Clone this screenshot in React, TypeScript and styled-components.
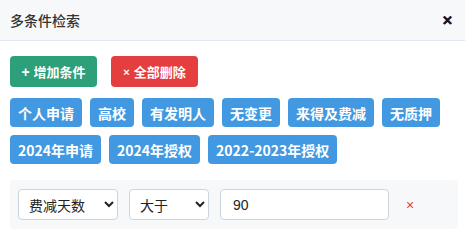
import styled, { createGlobalStyle } from 'styled-components';

const GlobalStyle = createGlobalStyle`
	body {
		margin: 0;
		background: #fff;
		font-family: 'Noto Sans CJK SC', 'Noto Sans', sans-serif;
	}
`;

interface ITag {
	label: string;
}

const row1: ITag[] = [
	{ label: '个人申请' },
	{ label: '高校' },
	{ label: '有发明人' },
	{ label: '无变更' },
	{ label: '来得及费减' },
	{ label: '无质押' },
];

const row2: ITag[] = [
	{ label: '2024年申请' },
	{ label: '2024年授权' },
	{ label: '2022-2023年授权' },
];

const App = (): JSX.Element => {
	return (
		<>
			<GlobalStyle />
			<Dialog>
				<Header>
					<Title>多条件检索</Title>
					<Close>✕</Close>
				</Header>
				<Body>
					<Actions>
						<ActionButton $color="#2d9f7b">
							<Sign>+</Sign>增加条件
						</ActionButton>
						<ActionButton $color="#e53e3e">
							<Sign $small>×</Sign>全部删除
						</ActionButton>
					</Actions>
					<TagRow>
						{row1.map((t) => (
							<Tag key={t.label}>{t.label}</Tag>
						))}
					</TagRow>
					<TagRow>
						{row2.map((t) => (
							<Tag key={t.label}>{t.label}</Tag>
						))}
					</TagRow>
					<Condition>
						<Select $width={100} defaultValue="fee">
							<option value="fee">费减天数</option>
						</Select>
						<Select $width={80} defaultValue="gt">
							<option value="gt">大于</option>
						</Select>
						<Input defaultValue="90" />
						<Remove>×</Remove>
					</Condition>
				</Body>
			</Dialog>
		</>
	);
};

export default App;

const Dialog = styled.div`
	width: 465px;
	height: 234px;
	overflow: hidden;
	background: #fff;
`;

const Header = styled.div`
	display: flex;
	align-items: center;
	justify-content: space-between;
	height: 40px;
	padding: 0 10px;
	background: #f7f8fa;
	border-bottom: 1px solid #e2e8f0;
`;

const Title = styled.h3`
	margin: 0;
	font-size: 14px;
	font-weight: 500;
	color: #333;
`;

const Close = styled.span`
	font-size: 13px;
	font-weight: 900;
	color: #111;
	font-family: 'DejaVu Sans', sans-serif;
	-webkit-text-stroke: 1px #111;
	margin-right: 2px;
`;

const Body = styled.div`
	display: flex;
	flex-direction: column;
	padding: 15px 10px 0;
`;

const Actions = styled.div`
	display: flex;
	gap: 14px;
	margin-bottom: 11px;
`;

const ActionButton = styled.button<{ $color: string }>`
	display: inline-flex;
	align-items: center;
	justify-content: center;
	width: 87px;
	height: 31px;
	border: none;
	border-radius: 4px;
	background: ${(p) => p.$color};
	color: #fff;
	font-family: inherit;
	font-size: 13px;
	font-weight: 700;
	padding: 0;
`;

const Sign = styled.span<{ $small?: boolean }>`
	font-family: 'Liberation Sans', sans-serif;
	font-size: ${(p) => (p.$small ? '11px' : '14px')};
	margin-right: 4px;
`;

const TagRow = styled.div`
	display: flex;
	gap: 8px;
	margin-bottom: 8px;
`;

const Tag = styled.span`
	display: inline-flex;
	align-items: center;
	height: 29px;
	padding: 0 8px;
	border-radius: 4px;
	background: #4299e1;
	color: #fff;
	font-size: 14px;
	font-weight: 700;
	font-family: 'Noto Sans CJK SC', sans-serif;
`;

const Condition = styled.div`
	display: flex;
	align-items: center;
	gap: 11px;
	margin-top: 8px;
	width: 448px;
	height: 49px;
	padding: 0 8px;
	box-sizing: border-box;
	background: #f7f8fa;
	border-radius: 4px;
`;

const Select = styled.select<{ $width: number }>`
	width: ${(p) => p.$width}px;
	height: 31px;
	padding: 0 6px;
	border: 1px solid #cbd5e0;
	border-radius: 4px;
	background: #fff;
	color: #222;
	font-family: inherit;
	font-size: 14px;
`;

const Input = styled.input`
	width: 169px;
	height: 31px;
	box-sizing: border-box;
	padding: 0 12px;
	border: 1px solid #cbd5e0;
	border-radius: 4px;
	background: #fff;
	color: #222;
	font-family: 'Liberation Sans', sans-serif;
	font-size: 14px;
`;

const Remove = styled.span`
	margin-left: 6px;
	color: #e53e3e;
	font-size: 14px;
	font-family: 'Liberation Sans', sans-serif;
`;
